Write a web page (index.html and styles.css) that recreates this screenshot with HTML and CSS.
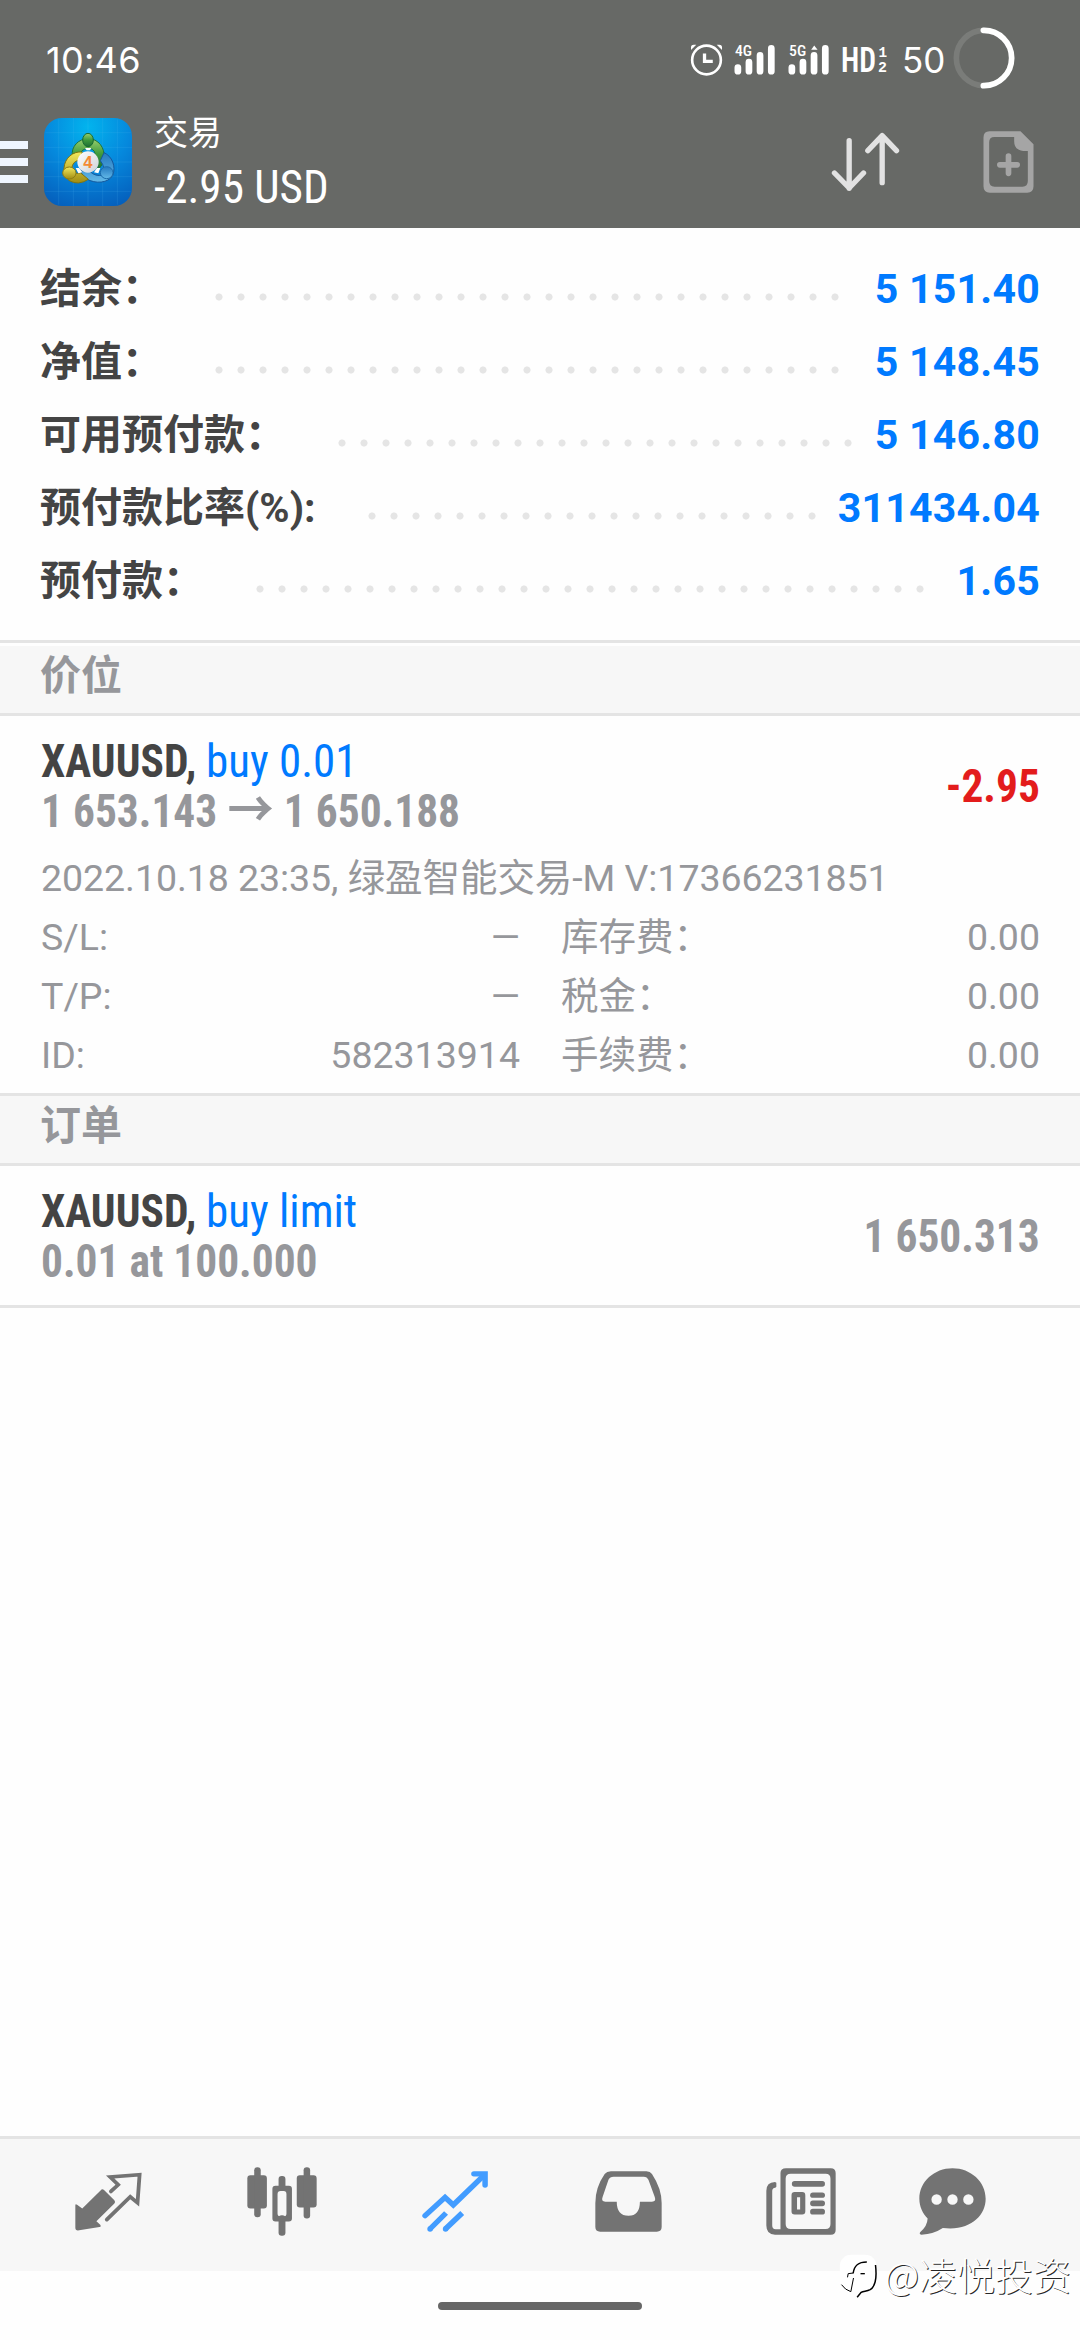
FILE: index.html
```
<!DOCTYPE html>
<html lang="zh-CN">
<head>
<meta charset="utf-8">
<title>交易</title>
<link rel="stylesheet" href="styles.css">
</head>
<body>
<div class="screen">
  <header class="header">
    <div class="status">
      <span class="clock">10:46</span>
      <svg class="alarm" viewBox="88 130 100 96"><g fill="none" stroke="#fff"><circle cx="138" cy="178" r="43.5" stroke-width="8"/><path d="M132 158V182H157" stroke-width="10"/></g><path d="M91 148V138Q92 132 99 132H107ZM185 148V138Q184 132 177 132H169Z" fill="#fff"/></svg>
      <svg class="signal" viewBox="221 132 122 92"><g stroke="#fff" stroke-width="20" stroke-linecap="round"><path d="M232.500 202V213M265.500 186V213M298.500 166V213M332 145V213"/></g><text x="224" y="168" class="net" textLength="51" lengthAdjust="spacingAndGlyphs">4G</text></svg>
      <svg class="signal" viewBox="383 132 122 92"><g stroke="#fff" stroke-width="20" stroke-linecap="round"><path d="M394.500 202V213M427.500 186V213M460.500 166V213M494 145V213"/></g><path d="M452 149L461 136L471 149Z" fill="#fff"/><text x="386" y="168" class="net" textLength="51" lengthAdjust="spacingAndGlyphs">5G</text></svg>
      <svg class="hd" viewBox="544 132 136 92"><text x="541" y="217" class="hd-text" textLength="106" lengthAdjust="spacingAndGlyphs">HD</text><text x="654" y="171" class="sim" textLength="26" lengthAdjust="spacingAndGlyphs">1</text><text x="653" y="217" class="sim" textLength="27" lengthAdjust="spacingAndGlyphs">2</text></svg>
      <span class="level">50</span>
      <svg class="ring" viewBox="878 80 186 186"><g fill="none" stroke-width="17"><circle cx="971" cy="173" r="83" stroke="#7a7c79"/><path d="M969 90H971A83 83 0 0 1 971 256H969" stroke="#fff" stroke-linecap="round"/></g></svg>
    </div>
    <div class="toolbar">
      <div class="menu"><b></b><b></b><b></b></div>
      <svg class="logo" viewBox="18 18 264 264">
        <defs>
          <radialGradient id="sky" cx=".5" cy=".1" r=".95"><stop offset="0" stop-color="#02b4ee"/><stop offset=".5" stop-color="#0589dd"/><stop offset="1" stop-color="#0560bd"/></radialGradient>
          <linearGradient id="green" x2="0" y2="1"><stop offset="0" stop-color="#9bd06f"/><stop offset=".5" stop-color="#3f9a3c"/><stop offset="1" stop-color="#1d6e35"/></linearGradient>
          <linearGradient id="gold" x2="0" y2="1"><stop offset="0" stop-color="#f3ea5d"/><stop offset="1" stop-color="#a18c12"/></linearGradient>
          <linearGradient id="blue" x2="0" y2="1"><stop offset="0" stop-color="#2479c0"/><stop offset="1" stop-color="#63b9e8"/></linearGradient>
          <linearGradient id="ball" x2="1" y2="1"><stop offset="0" stop-color="#fff"/><stop offset="1" stop-color="#ced2d6"/></linearGradient>
        </defs>
        <rect x="18" y="18" width="264" height="264" rx="54" fill="url(#sky)"/>
        <path d="M62 22V278M106 18V282M150 18V282M194 18V282M238 22V278M22 62H278M18 106H282M18 150H282M18 194H282M22 238H278" stroke="#5fc4f4" stroke-opacity=".22" stroke-width="2"/>
        <g stroke-width="3">
          <path d="M103 132C99 103 122 80 151 80C180 80 202 106 198 140Q195 160 181 172L170 144Q178 110 151 109Q127 111 124 133Z" fill="url(#green)" stroke="#1f7439"/>
          <path d="M198 122C222 132 235 164 224 190C211 214 172 216 146 201Q132 193 127 176L155 178Q173 195 195 189Q204 168 187 146Z" fill="url(#blue)" stroke="#15589c"/>
          <path d="M133 120C105 117 80 138 78 168C77 197 92 212 121 213Q138 211 151 202L127 182Q108 190 101 170Q104 146 125 145Z" fill="url(#gold)" stroke="#82750e"/>
          <ellipse cx="150" cy="84" rx="16" ry="20" fill="url(#green)" stroke="#186a31"/>
          <ellipse cx="94" cy="183" rx="20" ry="18" fill="url(#gold)" stroke="#8d7d13"/>
          <ellipse cx="206" cy="182" rx="19" ry="18" fill="url(#blue)" stroke="#1d6cab"/>
        </g>
        <path d="M113 168H123L133 181L121 184ZM187 168H177L168 181L181 184ZM141 108H160L156 115H146Z" fill="#fff"/>
        <circle cx="150" cy="150" r="32" fill="url(#ball)"/>
        <text x="150" y="169" class="four">4</text>
      </svg>
      <div class="titles"><div class="name">交易</div><div class="sum">-2.95 USD</div></div>
      <svg class="sort" viewBox="512 395 206 180"><path d="M566 421V564M522 518L566 563L609 518M665 547V406M622 451L665 406L708 451" fill="none" stroke="#e2e2e2" stroke-width="16" stroke-linecap="round" stroke-linejoin="round"/></svg>
      <svg class="doc" viewBox="968 393 152 186"><path fill-rule="evenodd" fill="#a5a5a5" d="M987 394H1080L1119 433V559Q1119 578 1100 578H988Q969 578 969 559V412Q969 394 987 394ZM1002 411Q986 411 986 427V543Q986 560 1002 560H1086Q1102 560 1102 543V453H1088Q1061 450 1061 424V411Z"/><path d="M1044 468V520M1018 494.500H1070" stroke="#a5a5a5" stroke-width="17" stroke-linecap="round"/></svg>
    </div>
  </header>

  <section class="account">
    <div class="row"><span class="label">结余：</span><span class="dots" style="--n:29"></span><span class="value">5 151.40</span></div>
    <div class="row"><span class="label">净值：</span><span class="dots" style="--n:29"></span><span class="value">5 148.45</span></div>
    <div class="row"><span class="label">可用预付款：</span><span class="dots" style="--n:24"></span><span class="value">5 146.80</span></div>
    <div class="row"><span class="label">预付款比率(%):</span><span class="dots" style="--n:21"></span><span class="value">311434.04</span></div>
    <div class="row"><span class="label">预付款：</span><span class="dots" style="--n:31"></span><span class="value">1.65</span></div>
  </section>

  <h2 class="group group-first">价位</h2>
  <section class="position">
    <div class="deal">
      <div>
        <div class="line"><span class="symbol">XAUUSD,</span><span class="side">buy 0.01</span></div>
        <div class="line price">1 653.143<span class="arrow">→</span>1 650.188</div>
      </div>
      <div class="amount loss">-2.95</div>
    </div>
    <div class="note">2022.10.18 23:35, 绿盈智能交易-M V:17366231851</div>
    <div class="facts">
      <div class="fact"><span>S/L:</span><span>—</span></div>
      <div class="fact"><span>库存费：</span><span>0.00</span></div>
      <div class="fact"><span>T/P:</span><span>—</span></div>
      <div class="fact"><span>税金：</span><span>0.00</span></div>
      <div class="fact"><span>ID:</span><span>582313914</span></div>
      <div class="fact"><span>手续费：</span><span>0.00</span></div>
    </div>
  </section>

  <h2 class="group">订单</h2>
  <section class="order">
    <div class="deal">
      <div>
        <div class="line"><span class="symbol">XAUUSD,</span><span class="side">buy limit</span></div>
        <div class="line price">0.01 at 100.000</div>
      </div>
      <div class="amount">1 650.313</div>
    </div>
  </section>

  <nav class="tabs">
    <svg style="width:67px;height:59px" viewBox="218 162 194 176" preserveAspectRatio="none"><path d="M219 262Q219 256 224 260L239 271L292 217Q297 211 302 216L332 246Q336 251 332 256L280 309L291 319Q295 325 289 326L230 336Q219 338 219 328Z" fill="#737373"/><path d="M322 220L343 200L320 177L405 170L399 254L378 236L310 304" fill="none" stroke="#737373" stroke-width="11" stroke-linecap="round"/></svg>
    <svg style="width:70px;height:69px" viewBox="714 146 204 206" preserveAspectRatio="none"><g fill="#737373"><rect x="715" y="171" width="57" height="99" rx="9"/><rect x="735" y="147" width="19" height="149" rx="9"/><rect x="859" y="171" width="58" height="96" rx="9"/><rect x="879" y="147" width="19" height="153" rx="9"/><rect x="806" y="173" width="20" height="40" rx="9"/><rect x="806" y="290" width="20" height="61" rx="9"/><path fill-rule="evenodd" d="M797 202H836Q845 202 845 211V300Q845 309 836 309H797Q788 309 788 300V211Q788 202 797 202ZM812 218Q803 218 803 227V285Q803 294 812 294H821Q829 294 829 285V227Q829 218 821 218Z"/></g></svg>
    <svg style="width:66px;height:61px" viewBox="1222 155 192 183" preserveAspectRatio="none"><g fill="none" stroke="#429cff" stroke-width="16"><path d="M1231 289L1289 234L1313 257L1402 168" stroke-linecap="round"/><path d="M1373 163.500H1405.500V197" stroke-linecap="round"/><path d="M1245 329L1292 281M1290 329L1339 281"/></g><circle cx="1245.500" cy="329" r="8" fill="#429cff"/><circle cx="1290.500" cy="329" r="8" fill="#429cff"/></svg>
    <svg style="width:67px;height:61px" viewBox="157 154 194 183" preserveAspectRatio="none"><path fill="#737373" fill-rule="evenodd" d="M203 155H306Q317 155 322 163Q350 207 350 250V322Q350 336 336 336H172Q158 336 158 322V250Q158 203 185 163Q191 155 203 155ZM211 171Q200 171 196 180L179 232Q174 246 187 246H220Q220 288 254 288Q287 288 287 246H322Q335 246 330 232L312 181Q308 171 298 171Z"/></svg>
    <svg style="width:70px;height:67px" viewBox="656 146 203 200" preserveAspectRatio="none"><g fill="#737373"><path fill-rule="evenodd" d="M714 147H844Q858 147 858 161V331Q858 345 844 345H682Q657 345 657 318V214Q657 189 682 188L686 190V202L683 205Q674 206 674 215V317Q674 329 684 329H698V161Q698 147 714 147ZM728 163Q713 163 713 178V313Q713 328 728 328H829Q843 328 843 313V178Q843 163 829 163Z"/><rect x="731" y="185" width="96" height="17" rx="8"/><path fill-rule="evenodd" d="M739 218H761Q770 218 770 227V276Q770 285 761 285H739Q730 285 730 276V227Q730 218 739 218ZM746 233V270H755V233Z"/><rect x="784" y="219" width="43" height="16" rx="8"/><rect x="784" y="243" width="43" height="17" rx="8"/><rect x="784" y="268" width="43" height="17" rx="8"/></g></svg>
    <svg style="width:67px;height:67px" viewBox="1102 146 194 200" preserveAspectRatio="none"><path fill="#737373" fill-rule="evenodd" d="M1199 147C1252 147 1295 187 1295 238C1295 289 1250 335 1171 325Q1145 343 1109 345Q1101 344 1106 337Q1126 320 1127 297C1113 282 1103 262 1103 238C1103 187 1146 147 1199 147ZM1153 224A15 16 0 1 0 1153 256A15 16 0 1 0 1153 224ZM1199 224A15 16 0 1 0 1199 256A15 16 0 1 0 1199 224ZM1245 224A15 16 0 1 0 1245 256A15 16 0 1 0 1245 224Z"/></svg>
  </nav>
  <footer class="gesture"><span></span></footer>

  <div class="watermark">
    <svg viewBox="8 60 116 132"><rect x="10" y="62" width="110" height="110" rx="34" fill="#fff"/><g fill="none" stroke="#000"><path d="M50 118C53 94 65 84 91 84" stroke-width="4.500"/><path d="M33 130L35 119L50 117" stroke-width="3"/><path d="M72 119H85" stroke-width="4"/><path d="M51 132L43 173Q26 168 15 152" stroke-width="3"/><path d="M117 93C122 136 116 158 101 167C90 173 81 170 74 175L62 190" stroke-width="4.500"/></g></svg>
    <span>@凌悦投资</span>
  </div>
</div>
</body>
</html>
```
FILE: styles.css
```
* { box-sizing: border-box; }
body {
  margin: 0;
  background: #fefefe;
  font-family: Roboto, "Noto Sans CJK SC", sans-serif;
}
svg { display: block; flex: none; }
.screen {
  position: relative;
  display: flex;
  flex-direction: column;
  width: 1080px;
  height: 2340px;
  overflow: hidden;
}

/* Header */
.header {
  height: 228px;
  background: #676966;
  color: #fff;
}
.status {
  display: flex;
  align-items: center;
  height: 96px;
  padding: 23px 65px 0 46px;
  font: 36px/36px Inter, sans-serif;
}
.clock {
  margin-right: auto;
  letter-spacing: .3px;
}
.alarm { width: 33px; height: 32px; margin-right: 11px; }
.signal { width: 41px; height: 31px; margin-right: 13px; }
.net {
  font: 500 43px "Roboto Condensed", sans-serif;
  fill: #fff;
}
.hd { width: 45px; height: 31px; margin-right: 15px; }
.hd-text {
  font: 600 108px "Roboto Condensed", sans-serif;
  fill: #fff;
}
.sim {
  font: 700 45px "Liberation Mono", monospace;
  fill: #fff;
}
.level {
  width: 51px;
  font-size: 35px;
}
.ring { width: 62px; height: 62px; margin-top: -4px; }
.toolbar {
  display: flex;
  align-items: center;
  height: 132px;
  padding-right: 46px;
}
.menu {
  display: flex;
  flex-direction: column;
  gap: 9px;
  width: 28px;
  margin-right: 16px;
}
.menu b { height: 8px; background: #eff6ff; }
.logo { width: 88px; height: 88px; margin-right: 22px; }
.four {
  font: 700 50px "Liberation Sans", sans-serif;
  fill: #f48a34;
  text-anchor: middle;
}
.titles { margin-right: auto; }
.name { font-size: 34px; line-height: 50px; }
.sum {
  font: 47px/58px "Roboto Condensed", sans-serif;
  transform: scaleX(.96);
  transform-origin: left;
}
.sort { width: 69px; height: 60px; margin-right: 83px; }
.doc { width: 51px; height: 62px; }

/* Account summary */
.account {
  padding: 25px 40px 22px;
  border-bottom: 3px solid #e4e4e4;
  font-size: 41px;
  font-weight: 700;
  line-height: 73px;
}
.row { display: flex; height: 73px; }
.label { color: #444; }
.dots {
  width: calc(var(--n) * 22px);
  margin-left: 45px;
  background: radial-gradient(circle at 11px 44px, #e5e5e5 3.200px, transparent 3.900px) 0 0 / 22px 73px repeat-x;
}
.value {
  margin-left: auto;
  color: #007aff;
  letter-spacing: .25px;
}

/* Group titles */
.group {
  height: 70px;
  margin: 0;
  padding-left: 40px;
  border-bottom: 3px solid #e4e4e4;
  background: #f7f7f7;
  color: #96979b;
  font-size: 41px;
  font-weight: 700;
  line-height: 61px;
}
.group-first { margin-top: 3px; }

/* Deals */
.position, .order {
  padding: 20px 40px 8px 41px;
  border-bottom: 3px solid #e4e4e4;
}
.order { padding-bottom: 19px; }
.deal {
  display: flex;
  align-items: center;
  justify-content: space-between;
  font: 700 47px/50px "Roboto Condensed", "Noto Sans CJK SC", sans-serif;
}
.line { height: 50px; white-space: nowrap; }
.symbol, .side { display: inline-block; transform-origin: left; }
.symbol {
  margin-right: -3.300px;
  color: #444;
  transform: scaleX(.924);
}
.side {
  color: #007aff;
  font-weight: 400;
  transform: scaleX(.957);
}
.price, .amount {
  color: #96979b;
  transform: scaleX(.924);
  transform-origin: left;
}
.amount { transform-origin: right; }
.arrow {
  margin: 0 11px;
  font: 700 50px/0 "Noto Sans CJK SC", sans-serif;
}
.amount.loss { color: #e31c1c; }
.note, .facts {
  color: #96979b;
  font-size: 37.500px;
  line-height: 59px;
}
.note {
  height: 59px;
  margin-top: 13px;
  letter-spacing: -.06px;
  white-space: nowrap;
}
.facts {
  display: grid;
  grid-template-columns: 479px 479px;
  column-gap: 41px;
}
.fact { display: flex; justify-content: space-between; height: 59px; }

/* Bottom navigation */
.tabs {
  display: grid;
  grid-template-columns: repeat(5, 173.200px) 130px;
  place-items: center;
  height: 135px;
  margin-top: auto;
  padding-left: 22px;
  padding-bottom: 7px;
  border-top: 3px solid #e4e4e4;
  background: #f7f7f7;
}
.gesture {
  display: flex;
  justify-content: center;
  height: 69px;
  padding-top: 31px;
}
.gesture span {
  width: 204px;
  height: 8px;
  border-radius: 4px;
  background: #666;
}

/* Watermark over the bottom corner */
.watermark {
  position: absolute;
  right: 9px;
  bottom: 38px;
  display: flex;
  align-items: center;
  color: #fff;
  font: 300 38px/50px "Noto Sans CJK SC", sans-serif;
  text-shadow: 1px 1px 0 rgba(0, 0, 0, .85);
}
.watermark span { margin-bottom: 3px; }
.watermark svg { width: 39px; height: 44px; margin-right: 6px; }
```
